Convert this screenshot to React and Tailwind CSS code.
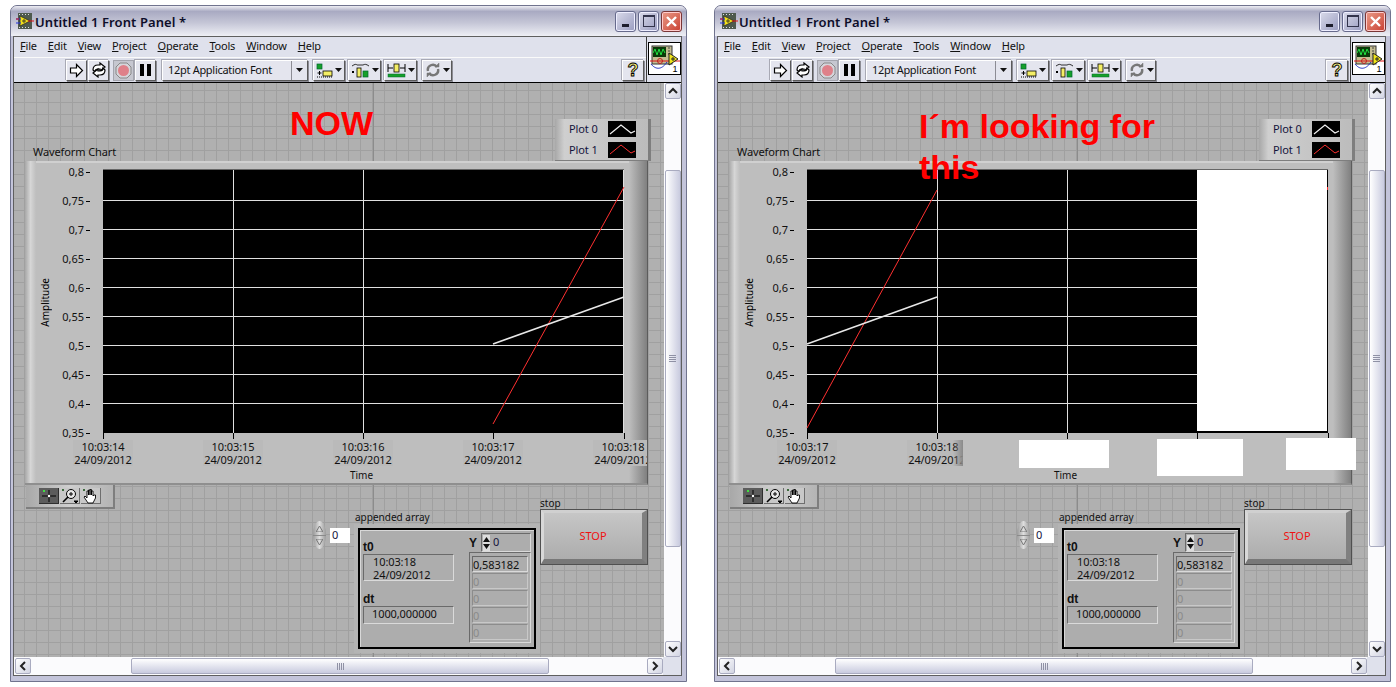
import React from "react";

const yTicks = ["0,8", "0,75", "0,7", "0,65", "0,6", "0,55", "0,5", "0,45", "0,4", "0,35"];
const menus = ["File", "Edit", "View", "Project", "Operate", "Tools", "Window", "Help"];
const btn =
  "flex items-center justify-center shrink-0 h-[21px] bg-[#e4e5ee] border border-t-white border-l-white border-b-[#5a5a5a] border-r-[#5a5a5a] shadow-[-1px_-1px_0_#a8a9b4,1px_1px_0_#8c8c94]";

function Caret() {
  return (
    <svg width="7" height="4" viewBox="0 0 7 4" className="ml-[2px]">
      <path d="M0 0h7L3.5 4z" fill="#111" />
    </svg>
  );
}

function ViMark() {
  return (
    <svg width="18" height="16" viewBox="0 0 18 16">
      <rect x="2" y="0" width="14" height="16" fill="#4e5a4e" />
      <path d="M3 1h1v1H3zM6 1h1v1H6zM9 1h1v1H9zM12 1h1v1h-1zM3 14h1v1H3zM6 14h1v1H6zM9 14h1v1H9zM12 14h1v1h-1z" fill="#ddd" />
      <path d="M4 3l10 5-10 5z" fill="#f2e21c" stroke="#222" strokeWidth="0.7" />
      <path d="M0 6h5M0 10h5" stroke="#2233dd" strokeWidth="1" />
      <path d="M12 8h6M0 6h3" stroke="#e01010" strokeWidth="1" />
      <path d="M6 8h4M8 6v4" stroke="#222" strokeWidth="0.8" />
    </svg>
  );
}

function Toolbar() {
  return (
    <div className="flex items-center h-[24px] pl-[52px] pr-[2px]">
      <div className={`${btn} w-[21px]`}>
        <svg width="15" height="15" viewBox="0 0 15 15">
          <path d="M1.5 5h6V1.5l6 6-6 6V10h-6z" fill="#fff" stroke="#000" strokeWidth="1.2" />
        </svg>
      </div>
      <div className={`${btn} w-[21px] ml-px`}>
        <svg width="16" height="16" viewBox="0 0 16 16" fill="none" stroke="#000" strokeWidth="1.2">
          <path d="M2 8c0-3 2-5 5-5h2V1l5 4-5 4V7H7C5 7 4 8 4 10z" fill="#fff" />
          <path d="M14 8c0 3-2 5-5 5H7v2l-5-4 5-4v2h2c2 0 3-1 3-3z" fill="#fff" />
        </svg>
      </div>
      <div className="flex items-center justify-center shrink-0 w-[21px] h-[21px] ml-[4px] bg-[#c6c7d0] border border-[#a4a5ae]">
        <svg width="17" height="17" viewBox="0 0 17 17">
          <path d="M5 1h7l4 4v7l-4 4H5l-4-4V5z" fill="#d5d5da" stroke="#888" />
          <circle cx="8.5" cy="8.5" r="5.5" fill="#df8089" />
        </svg>
      </div>
      <div className={`${btn} w-[21px] ml-px`}>
        <div className="flex gap-[3px]">
          <div className="w-[4px] h-[12px] bg-black" />
          <div className="w-[4px] h-[12px] bg-black" />
        </div>
      </div>
      <div className={`${btn} w-[146px] ml-[6px] !justify-start pl-[5px]`}>
        <span className="flex-1 pb-[2px] text-[11px] tracking-[-0.3px] leading-none text-[#111]">12pt Application Font</span>
        <div className="flex items-center justify-center h-full w-[16px] border-l border-[#8c8c94]">
          <svg width="7" height="4" viewBox="0 0 7 4">
            <path d="M0 0h7L3.5 4z" fill="#111" />
          </svg>
        </div>
      </div>
      <div className={`${btn} w-[32px] ml-[5px]`}>
        <svg width="17" height="15" viewBox="0 0 17 15">
          <rect x="1" y="1" width="5" height="5" fill="#16a02a" stroke="#063" strokeWidth="0.7" />
          <path d="M3.5 8v4M1.5 10h4" stroke="#000" />
          <rect x="7" y="8" width="9" height="5" fill="#f4ee66" stroke="#000" strokeWidth="0.8" />
          <path d="M1 14h15" stroke="#000" strokeDasharray="1 1" />
        </svg>
        <Caret />
      </div>
      <div className={`${btn} w-[33px] ml-[3px]`}>
        <svg width="19" height="15" viewBox="0 0 19 15">
          <path d="M1 3c3-2 4-2 5-1h6c2-1 3-1 6 1" fill="none" stroke="#000" strokeWidth="0.8" />
          <rect x="1" y="8" width="2" height="2" fill="#000" />
          <rect x="6" y="5" width="4" height="9" fill="#f4ee66" stroke="#000" strokeWidth="0.8" />
          <rect x="12" y="8" width="5" height="6" fill="#16a02a" stroke="#063" strokeWidth="0.7" />
        </svg>
        <Caret />
      </div>
      <div className={`${btn} w-[33px] ml-[3px]`}>
        <svg width="19" height="15" viewBox="0 0 19 15">
          <path d="M1 1v8M18 1v8M1 5h5M13 5h5" stroke="#000" />
          <rect x="7" y="1" width="5" height="8" fill="#f4ee66" stroke="#000" strokeWidth="0.8" />
          <rect x="1" y="11" width="17" height="3" fill="#16a02a" stroke="#063" strokeWidth="0.5" />
        </svg>
        <Caret />
      </div>
      <div className={`${btn} w-[30px] ml-[5px]`}>
        <svg width="16" height="14" viewBox="0 0 16 14" fill="none" stroke="#777" strokeWidth="2.4">
          <path d="M3 8a5 5 0 0 1 9-4" />
          <path d="M13 6a5 5 0 0 1-9 4" />
          <path d="M10 4h4V0zM6 10H2v4z" fill="#777" strokeWidth="0.5" />
        </svg>
        <Caret />
      </div>
      <div className={`${btn} w-[22px] ml-auto`}>
        <svg width="16" height="18" viewBox="0 0 16 18">
          <text x="8" y="15" textAnchor="middle" fontSize="18" fontWeight="700" fontFamily="Liberation Sans, sans-serif" fill="#f6ee7c" stroke="#000" strokeWidth="0.9">?</text>
        </svg>
      </div>
    </div>
  );
}

function ViIcon() {
  return (
    <div className="w-[33px] h-[33px] bg-white border border-black">
      <svg width="31" height="31" viewBox="0 0 31 31">
        <rect x="3" y="3" width="20" height="18" fill="#c4bd92" stroke="#333" />
        <rect x="4" y="4" width="13" height="10" fill="#0a3a0a" />
        <path d="M4 10l2-4 2 6 2-6 2 6 2-6 2 4" fill="none" stroke="#20e040" />
        <path d="M19 5h2M19 8h2M19 11h2" stroke="#444" />
        <path d="M2 21c4 5 10 7 16-2" fill="none" stroke="#2030c0" />
        <path d="M1 18h30" stroke="#e01010" />
        <circle cx="11" cy="18" r="2.5" fill="none" stroke="#c02020" />
        <path d="M20 10l9 6-9 6z" fill="#f0e41a" stroke="#222" />
        <path d="M22 16h4M24 14v4" stroke="#222" />
        <text x="26" y="29" textAnchor="middle" fontSize="9" fill="#000" fontFamily="Liberation Sans, sans-serif">1</text>
      </svg>
    </div>
  );
}

function ScrollBtn({ d, className }) {
  return (
    <div className={`flex items-center justify-center shrink-0 w-[16px] h-[16px] rounded-[2px] bg-gradient-to-br from-white to-[#d3d5e3] border border-[#a9abc0] ${className || ""}`}>
      <svg width="10" height="10" viewBox="0 0 10 10">
        <path d={d} fill="none" stroke="#222" strokeWidth="2" />
      </svg>
    </div>
  );
}

function Grip({ vertical }) {
  return (
    <div className={`flex ${vertical ? "flex-col w-[7px]" : "h-[7px]"} gap-px`}>
      {[0, 1, 2, 3].map((i) => (
        <div key={i} className={vertical ? "h-px w-full bg-[#8f91a5]" : "w-px h-full bg-[#8f91a5]"} />
      ))}
    </div>
  );
}

function Chart({ right }) {
  const ticks = [0, 130, 260, 390, 521];
  const hLines = [30, 59, 88, 117, 146, 175, 204, 233];
  const labels = [
    ["10:03:14", "10:03:15", "10:03:16", "10:03:17", "10:03:18"],
    ["10:03:17", "10:03:18"],
  ][right ? 1 : 0];
  return (
    <div className="absolute left-[11px] top-[78px] flex w-[623px] h-[324px] overflow-hidden bg-[#bebebe] border-b-2 border-r border-b-[#8f8f8f] border-r-[#5c5c5c] shadow-[inset_0_2px_0_#d0d0d0]">
      <div className="w-[11px] shrink-0 bg-gradient-to-r from-[#a8a8a8] via-[#d6d6d6] to-[#bebebe]" />
      <div className="flex items-center justify-center w-[16px] h-[283px] ml-px -mr-px shrink-0">
        <span className="[writing-mode:vertical-rl] rotate-180 text-[10px]">Amplitude</span>
      </div>
      <div className="flex flex-col justify-between w-[39px] h-[273px] mt-[5px] shrink-0">
        {yTicks.map((t) => (
          <div key={t} className="flex items-center justify-end h-[12px]">
            <span className="text-[11px] leading-[12px] text-[#111]">{t}</span>
            <div className="w-[4px] h-px ml-[2px] mr-px bg-black" />
          </div>
        ))}
      </div>
      <div className="flex flex-col w-[521px] ml-[12px] pt-[9px] shrink-0 relative z-10">
        <svg width="521" height="269" viewBox="0 0 521 269" className="shrink-0 overflow-visible">
          <rect x="0" y="0" width="521" height="263" fill="#000" />
          <path d="M0 -0.5H521" stroke="#666" />
          {right && <rect x="390" y="0" width="130" height="261" fill="#fff" />}
          {hLines.map((y) => (
            <path key={y} d={`M0 ${y + 0.5}H${right ? 390 : 521}`} stroke="#e0e0e0" />
          ))}
          {(right ? [130, 260] : [130, 260, 520]).map((x) => (
            <path key={x} d={`M${x + 0.5} 0V263`} stroke="#e0e0e0" />
          ))}
          {ticks.map((x) => (
            <path key={x} d={`M${x + 0.5} 263V269`} stroke="#000" />
          ))}
          {right ? (
            <g>
              <path d="M0 258L130 20" stroke="#ff3030" fill="none" />
              <path d="M0 174L130 127" stroke="#e8e8e8" strokeWidth="1.5" fill="none" />
              <path d="M520.5 17V20" stroke="#ff3030" />
            </g>
          ) : (
            <g>
              <path d="M390 254L521 17" stroke="#ff3030" fill="none" />
              <path d="M390 174L521 127" stroke="#e8e8e8" strokeWidth="1.5" fill="none" />
            </g>
          )}
        </svg>
        <div className={`flex -ml-[65px] mt-px relative overflow-hidden shrink-0 ${right ? "w-[221px]" : "w-[610px]"}`}>
          {labels.map((l) => (
            <div key={l} className="flex justify-center w-[130px] shrink-0">
              <div className="shrink-0 px-[1px] bg-[#bababa] text-center text-[11px] tracking-[-0.1px] leading-[13px] text-[#111] whitespace-nowrap">
                {l}
                <br />
                24/09/2012
              </div>
            </div>
          ))}
          {right && <div className="absolute right-0 top-0 bottom-0 w-[10px] bg-gradient-to-r from-transparent to-[#8a8a8a]" />}
        </div>
        <div className="mt-[3px] -ml-[4px] text-center text-[10px] leading-[12px] text-[#111]">Time</div>
      </div>
      <div className="ml-auto w-[18px] shrink-0 bg-gradient-to-r from-[#bebebe] to-[#808080]" />
    </div>
  );
}

function Legend() {
  return (
    <div className="absolute left-[541px] top-[36px] flex flex-col gap-[5px] w-[96px] h-[42px] pt-[2px] bg-gradient-to-r from-[#a8a8a8] via-[#cfcfcf] via-10% to-[#bcbcbc] border-r-[3px] border-b border-r-[#7e7e7e] border-b-[#7e7e7e]">
      <div className="flex items-center justify-between h-[16px] pl-[14px] pr-[12px]">
        <span className="pb-[2px] text-[11px] tracking-[-0.1px] leading-none text-[#14143c]">Plot 0</span>
        <svg width="28" height="16" viewBox="0 0 28 16">
          <rect width="28" height="16" fill="#000" />
          <path d="M2 13L13 4l10 8 4-2" fill="none" stroke="#f2f2f2" strokeWidth="1.2" />
        </svg>
      </div>
      <div className="flex items-center justify-between h-[16px] pl-[14px] pr-[12px]">
        <span className="pb-[2px] text-[11px] tracking-[-0.1px] leading-none text-[#14143c]">Plot 1</span>
        <svg width="28" height="16" viewBox="0 0 28 16">
          <rect width="28" height="16" fill="#000" />
          <path d="M2 12L13 3l10 8 4-2" fill="none" stroke="#ff3030" />
        </svg>
      </div>
    </div>
  );
}

function Palette() {
  return (
    <div className="absolute left-[12px] top-[402px] flex items-center gap-px w-[89px] h-[24px] pl-[13px] bg-gradient-to-r from-[#a8a8a8] via-[#cfcfcf] to-[#b4b4b4] border-r-2 border-b-2 border-[#7e7e7e]">
      <div className="flex items-center justify-center w-[20px] h-[16px] bg-[#5c5c5c] border-r border-b border-[#2e2e2e]">
        <svg width="16" height="14" viewBox="0 0 16 14">
          <path d="M8 1v12M1 7h14" stroke="#000" />
          <circle cx="8" cy="7" r="1.2" fill="#fff" />
          <rect x="2" y="1" width="2" height="2" fill="#40e040" />
        </svg>
      </div>
      <div className="flex items-center justify-center w-[20px] h-[16px] bg-[#c8c8c8] border-r border-b border-[#6e6e6e]">
        <svg width="18" height="16" viewBox="0 0 18 16" fill="none" stroke="#000">
          <circle cx="10" cy="6" r="4.5" fill="#e8e8e8" />
          <path d="M7 9L2 14" strokeWidth="1.6" />
          <path d="M8 6h4M10 4v4" />
          <path d="M13 13h4l-2 2z" fill="#000" />
          <rect x="1" y="1" width="2" height="2" fill="#3c6a3c" stroke="none" />
        </svg>
      </div>
      <div className="flex items-center justify-center w-[20px] h-[16px] bg-[#c8c8c8] border-r border-b border-[#6e6e6e]">
        <svg width="16" height="16" viewBox="0 0 16 16" fill="#fff" stroke="#000" strokeWidth="0.9">
          <path d="M5 15L1 9l1-1 2 2V3h1.5v4V2H7v5V1.5h1.5V7V3H10v5l1-1h1.5v3L10 15z" />
          <rect x="0" y="1" width="2" height="2" fill="#3c6a3c" stroke="none" />
        </svg>
      </div>
    </div>
  );
}

function ArrayCluster() {
  return (
    <div className="absolute left-[340px] top-[441px] p-[4px] w-[186px] h-[129px] bg-[#b4b4b4]">
      <div className="flex w-full h-full bg-[#adadad] border-2 border-black shadow-[inset_1px_1px_0_#d8d8d8] pl-[3px] pr-[3px] text-[#111]">
        <div className="flex flex-col w-[104px] shrink-0">
          <div className="mt-[10px] text-[12px] leading-[14px] font-bold font-['Liberation_Sans',sans-serif]">t0</div>
          <div className="pl-[9px] w-[91px] h-[27px] text-[11px] tracking-[-0.1px] leading-[13px] border-t border-l border-t-[#6a6a6a] border-l-[#6a6a6a] border-b border-r border-b-[#dadada] border-r-[#dadada]">
            10:03:18
            <br />
            24/09/2012
          </div>
          <div className="mt-[11px] text-[12px] leading-[14px] font-bold font-['Liberation_Sans',sans-serif]">dt</div>
          <div className="pl-[8px] w-[91px] h-[18px] text-[11px] tracking-[-0.1px] leading-[14px] border-t border-l border-t-[#6a6a6a] border-l-[#6a6a6a] border-b border-r border-b-[#dadada] border-r-[#dadada]">
            1000,000000
          </div>
        </div>
        <div className="flex flex-col flex-1">
          <div className="flex items-center justify-end gap-[4px] h-[22px] pt-[3px]">
            <span className="text-[12px] font-bold font-['Liberation_Sans',sans-serif]">Y</span>
            <div className="flex items-center gap-[3px] w-[50px] h-[19px] border border-t-[#6a6a6a] border-l-[#6a6a6a] border-b-[#dadada] border-r-[#dadada]">
              <svg width="7" height="16" viewBox="0 0 7 16" className="ml-px">
                <rect width="7" height="16" fill="#ddd" />
                <path d="M0 7h7L3.5 2zM0 9h7l-3.5 5z" fill="#111" />
              </svg>
              <span className="pb-[2px] text-[11px] leading-none text-[#14143c]">0</span>
            </div>
          </div>
          <div className="flex flex-col gap-px ml-auto w-[62px] h-[91px] pt-[3px] px-[2px] border border-t-[#6a6a6a] border-l-[#6a6a6a] border-b-[#dadada] border-r-[#dadada] text-[11px] tracking-[-0.1px] leading-[15px]">
            <div className="h-[16px] border border-t-[#6a6a6a] border-l-[#6a6a6a] border-b-[#dadada] border-r-[#dadada]">0,583182</div>
            {[0, 1, 2, 3].map((i) => (
              <div key={i} className="h-[16px] text-[#8a8a8a] border border-t-[#8c8c8c] border-l-[#8c8c8c] border-b-[#c8c8c8] border-r-[#c8c8c8]">0</div>
            ))}
          </div>
        </div>
      </div>
    </div>
  );
}

function PanelObjects() {
  return (
    <>
      <Legend />
      <div className="absolute left-[19px] top-[62px] text-[11px] tracking-[-0.1px] leading-[13px] text-[#111]">Waveform Chart</div>
      <Palette />
      <div className="absolute left-[299px] top-[438px] flex items-center">
        <div className="flex flex-col items-center justify-center gap-[3px] w-[13px] h-[28px] rounded-[50%] bg-gradient-to-r from-[#9a9a9a] via-[#dedede] to-[#9a9a9a]">
          <svg width="7" height="6" viewBox="0 0 7 6"><path d="M0 6L3.5 0 7 6z" fill="none" stroke="#777" /></svg>
          <div className="w-full h-px bg-[#8a8a8a]" />
          <svg width="7" height="6" viewBox="0 0 7 6"><path d="M0 0l3.5 6L7 0z" fill="none" stroke="#777" /></svg>
        </div>
        <div className="w-[20px] h-[15px] ml-[4px] pl-[2px] bg-white text-[11px] leading-[14px] text-[#14143c]">0</div>
      </div>
      <div className="absolute left-[341px] top-[428px] text-[10px] leading-[13px] text-[#111]">appended array</div>
      <ArrayCluster />
      <div className="absolute left-[526px] top-[414px] text-[10px] leading-[13px] text-[#111]">stop</div>
      <div className="absolute left-[526px] top-[426px] w-[108px] h-[56px] border border-[#505050]">
        <div className="flex items-center justify-center w-full h-full bg-gradient-to-b from-[#c6c6c6] to-[#adadad] border-t-[3px] border-l-[3px] border-b-[5px] border-r-[5px] border-t-[#d0d0d0] border-l-[#d8d8d8] border-b-[#787878] border-r-[#808080] text-[11px] text-[#f01010]">
          STOP
        </div>
      </div>
    </>
  );
}

function Window({ title, children }) {
  return (
    <div className="flex flex-col w-[677px] h-[677px] rounded-t-[7px] border border-[#70738e] bg-[#c3c4da]">
      <div className="flex items-center h-[30px] shrink-0 rounded-t-[6px] pl-[5px] pr-[4px] bg-[linear-gradient(to_bottom,#eeeef4_0%,#a9aac2_18%,#c4c5d6_55%,#eeeff5_100%)]">
        <ViMark />
        <span className="ml-px mt-[2px] text-[13px] tracking-[0.1px] font-semibold leading-none text-[#0e0e2a]">{title}</span>
        <div className="ml-auto flex gap-[2px]">
          <div className="flex items-end justify-center w-[21px] h-[21px] pb-[4px] rounded-[3px] border border-[#666a8c] bg-gradient-to-br from-[#dadbea] to-[#9a9cc0] shadow-[inset_0_0_0_1px_#eef]">
            <div className="w-[7px] h-[3px] bg-[#1c1c2c]" />
          </div>
          <div className="flex items-center justify-center w-[21px] h-[21px] rounded-[3px] border border-[#666a8c] bg-gradient-to-br from-[#dadbea] to-[#9a9cc0] shadow-[inset_0_0_0_1px_#eef]">
            <div className="w-[12px] h-[12px] border border-t-2 border-[#33344c]" />
          </div>
          <div className="flex items-center justify-center w-[21px] h-[21px] rounded-[3px] border border-[#7a3636] bg-gradient-to-br from-[#e89a88] to-[#c83c30] shadow-[inset_0_0_0_1px_#fcc]">
            <svg width="13" height="13" viewBox="0 0 13 13">
              <path d="M2 2l9 9M11 2l-9 9" stroke="#fff" strokeWidth="2.4" />
            </svg>
          </div>
        </div>
      </div>
      <div className="flex flex-col flex-1 min-h-0 ml-[2px] mr-[4px] mb-[5px] border border-[#5f5f5f] bg-white">
        <div className="flex h-[46px] shrink-0 bg-[#dfe1ec] border-b border-black">
          <div className="flex flex-col flex-1 min-w-0">
            <div className="flex items-center h-[21px] pl-[6px] pb-[3px] gap-[11px] border-b border-[#fafafa] text-[11px] tracking-[-0.2px] leading-none text-[#111]">
              {menus.map((m) => (
                <span key={m}>
                  <span className="underline">{m[0]}</span>
                  {m.slice(1)}
                </span>
              ))}
            </div>
            <Toolbar />
          </div>
          <div className="flex justify-center w-[35px] shrink-0 pt-[5px] border-l border-[#3c3c3c]">
            <ViIcon />
          </div>
        </div>
        <div className="flex flex-1 min-h-0">
          <div className="relative w-[650px] shrink-0 overflow-hidden bg-[#b0b0b0] bg-[linear-gradient(to_right,#a0a0a0_1px,transparent_1px),linear-gradient(to_bottom,#a0a0a0_1px,transparent_1px)] bg-[size:12px_12px] bg-[position:10px_7px]">
            <div className="absolute left-[359px] top-0 bottom-0 w-px bg-[#8c8c8c]" />
            {children}
          </div>
          <div className="flex flex-col items-center w-[17px] shrink-0 bg-[#fbfbfd]">
            <ScrollBtn d="M1 7l4-4 4 4" />
            <div className="flex items-center justify-center w-[16px] h-[377px] mt-[71px] rounded-[2px] border border-[#a9abc0] bg-gradient-to-r from-white to-[#c9cbdf]">
              <Grip vertical />
            </div>
            <ScrollBtn d="M1 3l4 4 4-4" className="mt-auto" />
          </div>
        </div>
        <div className="flex items-center h-[18px] shrink-0 pl-px bg-[#fbfbfd]">
          <ScrollBtn d="M7 1L3 5l4 4" />
          <div className="flex items-center justify-center w-[418px] h-[16px] ml-[100px] rounded-[2px] border border-[#a9abc0] bg-gradient-to-b from-white to-[#c9cbdf]">
            <Grip />
          </div>
          <ScrollBtn d="M3 1l4 4-4 4" className="ml-[98px]" />
          <div className="flex-1 h-full bg-[#dfe1ec]" />
        </div>
      </div>
    </div>
  );
}

export default function App() {
  return (
    <div className="flex gap-[27px] w-[1396px] h-[687px] pl-[10px] pt-[5px] bg-white font-['Noto_Sans',sans-serif]">
      <Window title="Untitled 1 Front Panel *">
        <PanelObjects />
        <Chart />
        <div className="absolute z-20 left-[276px] top-[20px] text-[34px] leading-[41px] font-bold text-[#ff0000] font-['Liberation_Sans',sans-serif]">NOW</div>
      </Window>
      <Window title="Untitled 1 Front Panel *">
        <PanelObjects />
        <Chart right />
        <div className="absolute z-20 left-[201px] top-[23px] w-[245px] text-[34px] leading-[41px] font-bold text-[#ff0000] font-['Liberation_Sans',sans-serif]">
          I´m looking for this
        </div>
        <div className="absolute z-20 left-[301px] top-[357px] w-[90px] h-[28px] bg-white" />
        <div className="absolute z-20 left-[439px] top-[356px] w-[86px] h-[37px] bg-white" />
        <div className="absolute z-20 left-[568px] top-[355px] w-[70px] h-[32px] bg-white" />
      </Window>
    </div>
  );
}
